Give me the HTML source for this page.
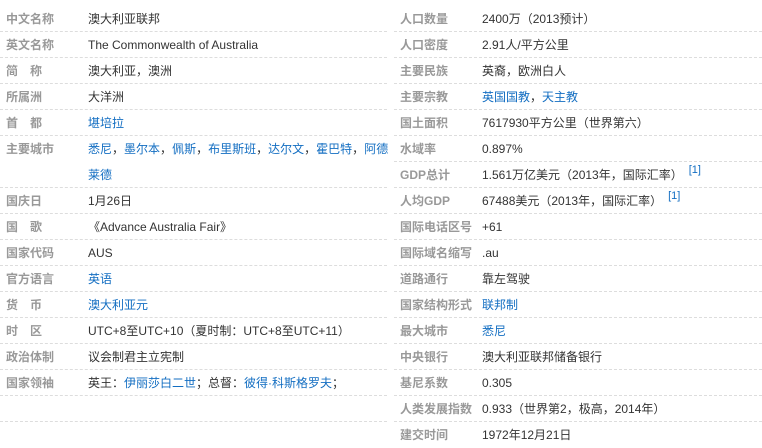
<!DOCTYPE html>
<html><head><meta charset="utf-8"><style>
body{margin:0;background:#fff;font-family:"Liberation Sans","Noto Sans CJK SC",sans-serif;font-size:12px;color:#333;}
.col{position:absolute;top:6px;}
.row{height:25px;border-bottom:1px dashed #ddd;position:relative;line-height:26px;}
.l{position:absolute;left:6px;color:#999;font-weight:bold;white-space:nowrap;}
.v{position:absolute;left:88px;white-space:nowrap;}
a{color:#136ec2;text-decoration:none;}
.s{color:#136ec2;font-size:11px;position:relative;top:-6px;margin-left:6px;line-height:0;vertical-align:baseline;}
</style></head><body>
<div class="col" style="left:0;width:387px;">
<div class="row"><span class="l">中文名称</span><span class="v">澳大利亚联邦</span></div>
<div class="row"><span class="l">英文名称</span><span class="v">The Commonwealth of Australia</span></div>
<div class="row"><span class="l">简　称</span><span class="v">澳大利亚，澳洲</span></div>
<div class="row"><span class="l">所属洲</span><span class="v">大洋洲</span></div>
<div class="row"><span class="l">首　都</span><span class="v"><a>堪培拉</a></span></div>
<div class="row" style="height:51px"><span class="l">主要城市</span><span class="v"><a>悉尼</a>，<a>墨尔本</a>，<a>佩斯</a>，<a>布里斯班</a>，<a>达尔文</a>，<a>霍巴特</a>，<a>阿德</a><br><a>莱德</a></span></div>
<div class="row"><span class="l">国庆日</span><span class="v">1月26日</span></div>
<div class="row"><span class="l">国　歌</span><span class="v">《Advance Australia Fair》</span></div>
<div class="row"><span class="l">国家代码</span><span class="v">AUS</span></div>
<div class="row"><span class="l">官方语言</span><span class="v"><a>英语</a></span></div>
<div class="row"><span class="l">货　币</span><span class="v"><a>澳大利亚元</a></span></div>
<div class="row"><span class="l">时　区</span><span class="v">UTC+8至UTC+10（夏时制：UTC+8至UTC+11）</span></div>
<div class="row"><span class="l">政治体制</span><span class="v">议会制君主立宪制</span></div>
<div class="row"><span class="l">国家领袖</span><span class="v">英王：<a>伊丽莎白二世</a>；总督：<a>彼得·科斯格罗夫</a>；</span></div>
<div class="row"></div>
</div>
<div class="col" style="left:394px;width:368px;">
<div class="row"><span class="l">人口数量</span><span class="v">2400万（2013预计）</span></div>
<div class="row"><span class="l">人口密度</span><span class="v">2.91人/平方公里</span></div>
<div class="row"><span class="l">主要民族</span><span class="v">英裔，欧洲白人</span></div>
<div class="row"><span class="l">主要宗教</span><span class="v"><a>英国国教</a>，<a>天主教</a></span></div>
<div class="row"><span class="l">国土面积</span><span class="v">7617930平方公里（世界第六）</span></div>
<div class="row"><span class="l">水域率</span><span class="v">0.897%</span></div>
<div class="row"><span class="l">GDP总计</span><span class="v">1.561万亿美元（2013年，国际汇率）<span class="s">[1]</span></span></div>
<div class="row"><span class="l">人均GDP</span><span class="v">67488美元（2013年，国际汇率）<span class="s">[1]</span></span></div>
<div class="row"><span class="l">国际电话区号</span><span class="v">+61</span></div>
<div class="row"><span class="l">国际域名缩写</span><span class="v">.au</span></div>
<div class="row"><span class="l">道路通行</span><span class="v">靠左驾驶</span></div>
<div class="row"><span class="l">国家结构形式</span><span class="v"><a>联邦制</a></span></div>
<div class="row"><span class="l">最大城市</span><span class="v"><a>悉尼</a></span></div>
<div class="row"><span class="l">中央银行</span><span class="v">澳大利亚联邦储备银行</span></div>
<div class="row"><span class="l">基尼系数</span><span class="v">0.305</span></div>
<div class="row"><span class="l">人类发展指数</span><span class="v">0.933（世界第2，极高，2014年）</span></div>
<div class="row" style="border-bottom:none"><span class="l">建交时间</span><span class="v">1972年12月21日</span></div>
</div>
</body></html>
